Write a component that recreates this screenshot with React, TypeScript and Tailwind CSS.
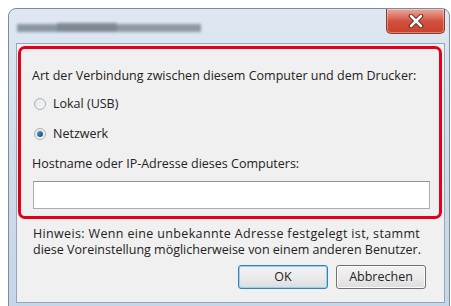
import React from "react";

function Radio({ checked }: { checked?: boolean }) {
  return (
    <div className="w-[12px] h-[12px] rounded-full border border-[#a9b2bb] bg-gradient-to-br from-[#e4e6e8] to-[#f8f8f8] flex items-center justify-center">
      {checked && <div className="w-[6px] h-[6px] rounded-full bg-gradient-to-br from-[#5aa0d0] to-[#17466f]" />}
    </div>
  );
}

export default function App() {
  const font = { fontFamily: '"Open Sans", "Noto Sans", sans-serif' };
  return (
    <div className="w-[451px] h-[306px] bg-white pl-[8px] pt-[8px] overflow-hidden text-[#222222]" style={font}>
      <div className="w-[442px] h-[300px] flex flex-col rounded-t-[8px] border border-[#7d8c9c] bg-gradient-to-b from-[#dfe8f2] via-[#cfdceb] to-[#c6d6e8] pl-[7px] pr-[4px] pb-[4px]">
        <div className="h-[34px] flex justify-between items-start">
          <div className="mt-[14px] ml-[1px] flex items-center blur-[1.5px]">
            <div className="w-[40px] h-[8px] bg-[#8a96a3]" />
            <div className="w-[60px] h-[9px] bg-[#7d8894]" />
            <div className="w-[84px] h-[8px] bg-[#8e99a5]" />
          </div>
          <div className="w-[59px] h-[25px] rounded-b-[5px] border border-t-0 border-[#8b3b30] bg-gradient-to-b from-[#e8a89b] via-[#d2523f] to-[#c8402c] flex items-center justify-center shadow-[inset_0_0_0_1px_rgba(255,255,255,0.35)]">
            <svg width="16" height="14" viewBox="0 0 16 14">
              <path d="M3 2 L13 12 M13 2 L3 12" stroke="#5a2018" strokeWidth="4.5" strokeLinecap="round" />
              <path d="M3 2 L13 12 M13 2 L3 12" stroke="#ffffff" strokeWidth="2.6" strokeLinecap="round" />
            </svg>
          </div>
        </div>
        <div className="flex-1 border border-[#95a6b8] bg-[#f0f0f0] pl-[1px] pr-[2px] pt-[2px] flex flex-col">
          <div className="rounded-[7px] border-[3px] border-[#e2001a] pl-[11px] pr-[9px] pt-[17px] pb-[7px] flex flex-col text-[12.5px] leading-[20px]">
            <div className="whitespace-nowrap">Art der Verbindung zwischen diesem Computer und dem Drucker:</div>
            <div className="mt-[8px] flex items-center">
              <div className="ml-[2px] mr-[7px]"><Radio /></div>
              <span>Lokal (USB)</span>
            </div>
            <div className="mt-[10px] flex items-center">
              <div className="ml-[2px] mr-[7px]"><Radio checked /></div>
              <span>Netzwerk</span>
            </div>
            <div className="mt-[10px]">Hostname oder IP-Adresse dieses Computers:</div>
            <div className="mt-[7px] ml-[1px] h-[28px] border border-[#abadb3] border-t-[#8e9299] bg-white" />
          </div>
          <div className="pl-[15px] mt-[7px] text-[12.5px] leading-[16px] whitespace-nowrap">
            <div className="tracking-[0.35px]">Hinweis: Wenn eine unbekannte Adresse festgelegt ist, stammt</div>
            <div>diese Voreinstellung möglicherweise von einem anderen Benutzer.</div>
          </div>
          <div className="mt-[7px] pr-[16px] flex justify-end gap-[8px] text-[12.5px]">
            <div className="w-[90px] h-[24px] rounded-[3px] border border-[#3c7fb1] shadow-[inset_0_0_0_1px_#8fd3f5] bg-gradient-to-b from-[#f2f2f2] via-[#ebebeb] to-[#dddddd] flex items-center justify-center">OK</div>
            <div className="w-[90px] h-[24px] rounded-[3px] border border-[#707070] shadow-[inset_0_0_0_1px_#fbfbfb] bg-gradient-to-b from-[#f2f2f2] via-[#ebebeb] to-[#dddddd] flex items-center justify-center">Abbrechen</div>
          </div>
        </div>
      </div>
    </div>
  );
}
